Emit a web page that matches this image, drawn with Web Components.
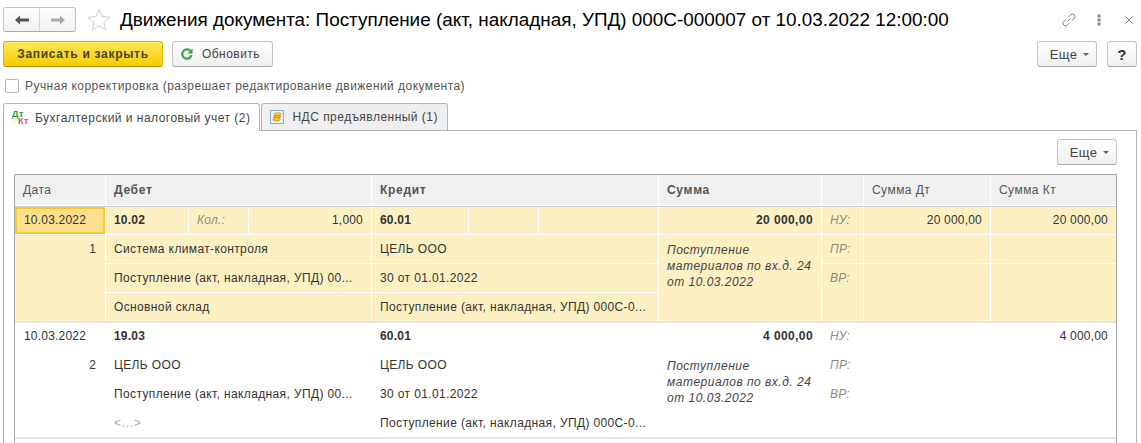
<!DOCTYPE html>
<html lang="ru">
<head>
<meta charset="utf-8">
<title>Движения документа</title>
<style>
  html, body { margin: 0; height: 100%; overflow: hidden; background: #fff; }
  body { font: 12px "Liberation Sans", Arial, sans-serif; color: #333; }
</style>
</head>
<body>

<doc-form>
  <form-head slot="head" title-text="Движения документа: Поступление (акт, накладная, УПД) 000С-000007 от 10.03.2022 12:00:00"></form-head>

  <form-bar slot="bar">
    <ui-button primary>Записать и закрыть</ui-button>
    <ui-button refresh>Обновить</ui-button>
    <ui-button menu slot="end">Еще</ui-button>
    <ui-button help slot="end">?</ui-button>
  </form-bar>

  <ui-check slot="check">Ручная корректировка (разрешает редактирование движений документа)</ui-check>

  <tab-strip slot="tabs">
    <tab-item active icon="dtkt">Бухгалтерский и налоговый учет (2)</tab-item>
    <tab-item icon="coins">НДС предъявленный (1)</tab-item>
  </tab-strip>

  <tab-panel slot="panel">
    <ui-button menu slot="tools">Еще</ui-button>
    <register-table>
      <register-head></register-head>
      <register-row selected number="1" date="10.03.2022" debit="10.02" qty="1,000" credit="60.01" sum="20 000,00" dt="20 000,00" kt="20 000,00" d1="Система климат-контроля" d2="Поступление (акт, накладная, УПД) 00..." d3="Основной склад" c1="ЦЕЛЬ ООО" c2="30 от 01.01.2022" c3="Поступление (акт, накладная, УПД) 000С-0..."></register-row>
      <register-row number="2" date="10.03.2022" debit="19.03" credit="60.01" sum="4 000,00" kt="4 000,00" d1="ЦЕЛЬ ООО" d2="Поступление (акт, накладная, УПД) 00..." d3="&lt;...&gt;" c1="ЦЕЛЬ ООО" c2="30 от 01.01.2022" c3="Поступление (акт, накладная, УПД) 000С-0..."></register-row>
    </register-table>
  </tab-panel>
</doc-form>

<script>
// small helper, every element below just fills its own open shadow root
const shadow = (el, html) => {
  if (!el.shadowRoot) el.attachShadow({mode: 'open'})
  el.shadowRoot.innerHTML = html
}

const esc = s => String(s == null ? '' : s).replace(/&/g, '&amp;').replace(/</g, '&lt;').replace(/"/g, '&quot;')

class DocForm extends HTMLElement {
  connectedCallback() {
    shadow(this, `
      <style>
        :host { display: flex; flex-direction: column; height: 443px; box-sizing: border-box; padding: 0 4px 0 3px; overflow: hidden; }
        .check { display: block; margin: 11px 0 0 2px; }
        .tabs { display: block; margin-top: 9px; }
      </style>
      <slot name="head"></slot>
      <slot name="bar"></slot>
      <div class="check"><slot name="check"></slot></div>
      <div class="tabs"><slot name="tabs"></slot></div>
      <slot name="panel"></slot>
    `)
  }
}

class FormHead extends HTMLElement {
  connectedCallback() {
    shadow(this, `
      <style>
        :host { display: flex; align-items: center; height: 41px; box-sizing: border-box; padding-bottom: 2px; }
        .nav { display: flex; width: 73px; height: 25px; box-sizing: border-box; border: 1px solid #c4c4c4; border-bottom-color: #a8a8a8; border-radius: 3px; background: linear-gradient(#fff, #f0f0f0); }
        .nav span { flex: 1; display: flex; align-items: center; justify-content: center; }
        .nav span + span { border-left: 1px solid #d6d6d6; }
        .star { margin-left: 11px; }
        h1 { margin: 0 0 0 9px; font: 400 18.9px "Liberation Sans", Arial, sans-serif; color: #000; white-space: nowrap; flex: 1; }
        .tools { display: flex; align-items: center; }
      </style>
      <div class="nav">
        <span><svg width="14" height="10" viewBox="0 0 14 10"><path d="M0 5 5 .5V3.5H14V6.5H5V9.5Z" fill="#555"/></svg></span>
        <span><svg width="14" height="10" viewBox="0 0 14 10"><path d="M14 5 9 .5V3.5H0V6.5H9V9.5Z" fill="#aaa"/></svg></span>
      </div>
      <svg class="star" width="24" height="23" viewBox="0 0 24 23"><path d="M12 1.2 15 8.6 23 9.2 16.9 14.3 18.8 22 12 17.8 5.2 22 7.1 14.3 1 9.2 9 8.6Z" fill="none" stroke="#c9ced3"/></svg>
      <h1>${esc(this.getAttribute('title-text'))}</h1>
      <div class="tools">
        <svg width="16" height="16" viewBox="0 0 16 16" fill="none" stroke="#7d7d7d" stroke-width="1"><path d="M6.5 9.5 9.5 6.5"/><path d="M7.5 5 10 2.5a2.6 2.6 0 0 1 3.6 3.6L11 8.5"/><path d="M8.5 11 6 13.5A2.6 2.6 0 0 1 2.4 9.9L5 7.5"/></svg>
        <svg style="margin-left:20px" width="4" height="12" viewBox="0 0 4 12" fill="#8a8a8a"><rect x="0.5" y="0.5" width="3" height="3"/><rect x="0.5" y="4.5" width="3" height="3"/><rect x="0.5" y="8.5" width="3" height="3"/></svg>
        <svg style="margin:0 4px 0 24px" width="8" height="8" viewBox="0 0 8 8" stroke="#8a8a8a" fill="none"><path d="M.5.5 7.5 7.5M7.5.5.5 7.5"/></svg>
      </div>
    `)
  }
}

class FormBar extends HTMLElement {
  connectedCallback() {
    shadow(this, `
      <style>
        :host { display: flex; justify-content: space-between; height: 26px; }
        div { display: flex; gap: 9px; }
        div + div { gap: 10px; }
      </style>
      <div><slot></slot></div>
      <div><slot name="end"></slot></div>
    `)
  }
}

class UiButton extends HTMLElement {
  connectedCallback() {
    const refresh = this.hasAttribute('refresh') ? `<svg width="12" height="12" viewBox="0 0 13 13" fill="none"><path d="M10.4 3.6A5 5 0 1 0 11.3 7.5" stroke="#3fa142" stroke-width="2.4"/><path d="M12.6.6V6H7.2Z" fill="#3fa142"/></svg>` : ''
    const caret = this.hasAttribute('menu') ? `<svg width="6" height="3" viewBox="0 0 6 3"><path d="M0 0H6L3 3Z" fill="#666"/></svg>` : ''
    shadow(this, `
      <style>
        :host { display: inline-flex; height: 26px; }
        div { display: flex; align-items: center; justify-content: center; gap: 9px; box-sizing: border-box; height: 26px; padding: 0 13px; border: 1px solid #c4c4c4; border-bottom-color: #a8a8a8; border-radius: 3px; background: linear-gradient(#fff, #efefef); color: #444; font: 12px "Liberation Sans", Arial, sans-serif; white-space: nowrap; letter-spacing: .45px; }
        :host([primary]) div { width: 160px; padding: 0; font-weight: 700; letter-spacing: .7px; color: #4a4420; border-color: #d8b400; border-bottom-color: #b09000; background: linear-gradient(#ffe75a, #f5cd00); }
        :host([refresh]) div { width: 101px; padding: 0 0 0 8px; justify-content: flex-start; }
        :host([menu]) div { width: 60px; padding: 0 0 0 5px; gap: 6px; font-size: 13px; letter-spacing: .3px; }
        :host([help]) div { width: 30px; padding: 0; font-size: 15px; font-weight: 700; color: #333; }
      </style>
      <div>${refresh}<slot></slot>${caret}</div>
    `)
  }
}

class UiCheck extends HTMLElement {
  connectedCallback() {
    shadow(this, `
      <style>
        :host { display: flex; align-items: center; gap: 6px; height: 16px; color: #555; font: 12px "Liberation Sans", Arial, sans-serif; letter-spacing: .45px; }
        i { width: 14px; height: 14px; box-sizing: border-box; border: 1px solid #b5b5b5; border-radius: 2px; background: #fff; }
      </style>
      <i></i><slot></slot>
    `)
  }
}

class TabStrip extends HTMLElement {
  connectedCallback() {
    shadow(this, `
      <style>
        :host { display: flex; gap: 1px; height: 28px; align-items: flex-start; position: relative; z-index: 1; }
      </style>
      <slot></slot>
    `)
  }
}

class TabItem extends HTMLElement {
  connectedCallback() {
    const icons = {
      dtkt: `<svg width="18" height="16" viewBox="0 0 18 16"><text x="0" y="7" font-size="9" font-weight="700" font-family="Liberation Sans" fill="#1a9a3c">Дт</text><text x="6" y="14" font-size="9" font-weight="700" font-family="Liberation Sans" fill="#e0504f">Кт</text></svg>`,
      coins: `<svg width="14" height="14" viewBox="0 0 14 14"><rect x=".5" y=".5" width="13" height="13" fill="#eef3f8" stroke="#8fa9bf"/><g stroke="#a9841a" stroke-width=".6"><ellipse cx="7.5" cy="4.4" rx="3.6" ry="1.7" fill="#f5d04a"/><ellipse cx="7" cy="6.9" rx="3.6" ry="1.7" fill="#e8b21f"/><ellipse cx="6.5" cy="9.4" rx="3.6" ry="1.7" fill="#f1c232"/></g></svg>`
    }
    shadow(this, `
      <style>
        :host { display: flex; align-items: center; box-sizing: border-box; height: 27px; padding: 0 9px 1px 8px; gap: 8px; border: 1px solid #b5b5b5; border-bottom: 0; border-radius: 3px 3px 0 0; background: #efefef; color: #444; font: 12px "Liberation Sans", Arial, sans-serif; letter-spacing: .48px; }
        :host([active]) { height: 28px; background: #fff; padding: 0 9px 0 8px; gap: 5px; }
      </style>
      ${icons[this.getAttribute('icon')] || ''}<slot></slot>
    `)
  }
}

class TabPanel extends HTMLElement {
  connectedCallback() {
    shadow(this, `
      <style>
        :host { display: flex; flex-direction: column; flex: 1; min-height: 0; box-sizing: border-box; margin-top: -1px; border: 1px solid #b5b5b5; border-bottom: 0; padding: 8px 19px 0 10px; }
        .tools { display: flex; justify-content: flex-end; height: 35px; }
      </style>
      <div class="tools"><slot name="tools"></slot></div>
      <slot></slot>
    `)
  }
}

class RegisterTable extends HTMLElement {
  connectedCallback() {
    shadow(this, `
      <style>
        :host { display: block; flex: 1; border: 1px solid #a6a6a6; border-bottom: 0; }
      </style>
      <slot></slot>
    `)
  }
}

const columns = '90px 82px 59px 122px 96px 69px 119px 162px 41px 126px 125px'

class RegisterHead extends HTMLElement {
  connectedCallback() {
    shadow(this, `
      <style>
        :host { display: grid; grid-template-columns: ${columns}; column-gap: 1px; box-sizing: border-box; height: 32px; padding-bottom: 1px; background: #fff; border-bottom: 1px solid #d0d0d0; font: 12px "Liberation Sans", Arial, sans-serif; color: #555; letter-spacing: .45px; }
        div { display: flex; align-items: center; padding-left: 8px; background: #f0f0f0; }
        .b { font-weight: 700; letter-spacing: .7px; }
      </style>
      <div>Дата</div>
      <div class="b" style="grid-column:span 3">Дебет</div>
      <div class="b" style="grid-column:span 3">Кредит</div>
      <div class="b">Сумма</div>
      <div></div>
      <div>Сумма Дт</div>
      <div>Сумма Кт</div>
    `)
  }
}

class RegisterRow extends HTMLElement {
  connectedCallback() {
    const a = n => esc(this.getAttribute(n))
    const sel = this.hasAttribute('selected')
    const comment = 'Поступление материалов по вх.д. 24 от 10.03.2022'
    shadow(this, `
      <style>
        :host { display: grid; grid-template-columns: ${columns}; grid-template-rows: 27px 28px 28px 28px; gap: 1px; border-bottom: 2px solid #e6e6e6; font: 12px "Liberation Sans", Arial, sans-serif; color: #333; letter-spacing: .2px; }
        div { box-sizing: border-box; padding: 0 8px; line-height: 28px; white-space: nowrap; min-width: 0; }
        :host([selected]) div { background: #fdf1c4; }
        .first { line-height: 27px; }
        .t { letter-spacing: .37px; }
        .b { font-weight: 700; }
        .sum { letter-spacing: .4px; }
        .r { text-align: right; }
        .l { color: #8f8a78; font-style: italic; }
        .note { grid-column: 8; grid-row: 2 / span 3; font-style: italic; white-space: normal; line-height: 16px; padding: 7px 0 0 8px; color: #444; letter-spacing: .5px; }
        .dots { color: #aaa; letter-spacing: .7px; }
        :host([selected]) .cur { background: #fde08d; box-shadow: inset 0 0 0 2px #fcc729; }
      </style>
      <div class="first cur" style="padding:0 9px">${a('date')}</div>
      <div class="first b">${a('debit')}</div>
      <div class="first l">${sel ? 'Кол.:' : ''}</div>
      <div class="first r">${a('qty')}</div>
      <div class="first b">${a('credit')}</div>
      <div class="first"></div>
      <div class="first"></div>
      <div class="first b r sum">${a('sum')}</div>
      <div class="first l">НУ:</div>
      <div class="first r">${a('dt')}</div>
      <div class="first r">${a('kt')}</div>

      <div class="r" style="grid-column:1;grid-row:2 / span 3;padding-right:9px">${a('number')}</div>
      <div class="t" style="grid-column:2 / span 3;grid-row:2">${a('d1')}</div>
      <div class="t" style="grid-column:5 / span 3;grid-row:2">${a('c1')}</div>
      <div class="note">${comment}</div>
      <div class="l" style="grid-column:9;grid-row:2">ПР:</div>
      <div style="grid-column:10;grid-row:2"></div>
      <div style="grid-column:11;grid-row:2"></div>

      <div class="t" style="grid-column:2 / span 3;grid-row:3">${a('d2')}</div>
      <div class="t" style="grid-column:5 / span 3;grid-row:3">${a('c2')}</div>
      <div class="l" style="grid-column:9;grid-row:3 / span 2">ВР:</div>
      <div style="grid-column:10;grid-row:3 / span 2"></div>
      <div style="grid-column:11;grid-row:3 / span 2"></div>

      <div class="t ${sel ? '' : 'dots'}" style="grid-column:2 / span 3;grid-row:4">${a('d3')}</div>
      <div class="t" style="grid-column:5 / span 3;grid-row:4">${a('c3')}</div>
    `)
  }
}

customElements.define('doc-form', DocForm)
customElements.define('form-head', FormHead)
customElements.define('form-bar', FormBar)
customElements.define('ui-button', UiButton)
customElements.define('ui-check', UiCheck)
customElements.define('tab-strip', TabStrip)
customElements.define('tab-item', TabItem)
customElements.define('tab-panel', TabPanel)
customElements.define('register-table', RegisterTable)
customElements.define('register-head', RegisterHead)
customElements.define('register-row', RegisterRow)
</script>
</body>
</html>
